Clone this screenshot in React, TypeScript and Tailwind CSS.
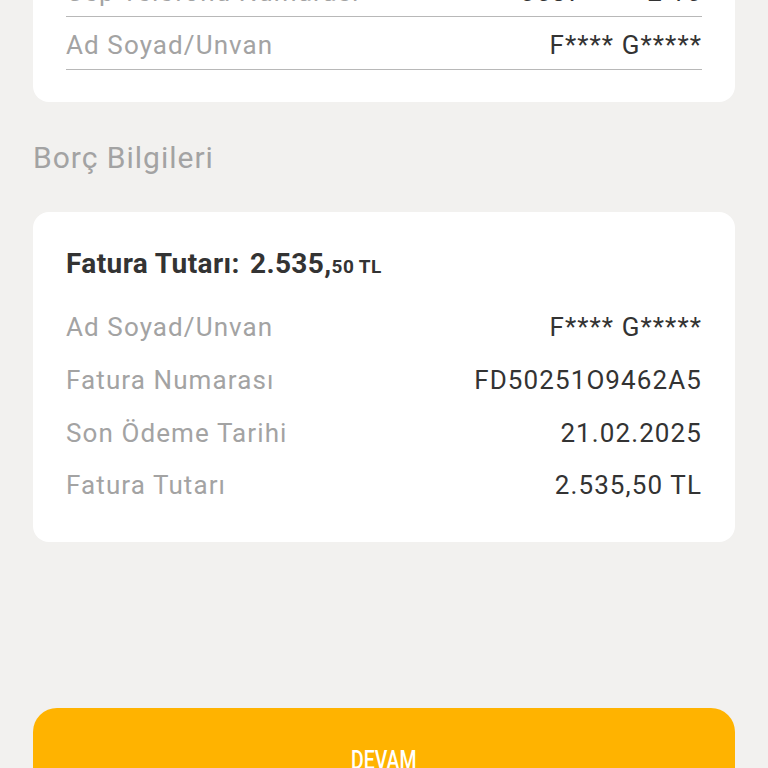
import React from 'react';

type Row = { label: string; value: string };

const customerRows: Row[] = [
  { label: 'Cep Telefonu Numarası', value: '0537 *** *2 16' },
  { label: 'Ad Soyad/Unvan', value: 'F**** G*****' },
];

const debtRows: Row[] = [
  { label: 'Ad Soyad/Unvan', value: 'F**** G*****' },
  { label: 'Fatura Numarası', value: 'FD50251O9462A5' },
  { label: 'Son Ödeme Tarihi', value: '21.02.2025' },
  { label: 'Fatura Tutarı', value: '2.535,50 TL' },
];

const App: React.FC = () => {
  return (
    <div
      className="min-h-screen w-full bg-[#f2f1ef] px-[33px] overflow-hidden"
      style={{ fontFamily: 'Roboto, "Noto Sans", sans-serif' }}
    >
      {/* Customer info card (scrolled, top cut off) */}
      <div className="mt-[-60px] rounded-[16px] bg-white px-[33px] pt-6 pb-[32px]">
        {customerRows.map((r) => (
          <div
            key={r.label}
            className="flex items-center justify-between border-b-[1.5px] border-[#b8b8b8] pt-[13px] pb-[9px] text-[26px] leading-[30px] tracking-[1.1px]"
          >
            <span className="text-[#a3a3a3]">{r.label}</span>
            <span className="text-[#333333]">{r.value}</span>
          </div>
        ))}
      </div>

      <h2 className="mt-[39px] text-[30px] leading-[34px] tracking-[1px] text-[#a3a3a3]">Borç Bilgileri</h2>

      {/* Debt info card */}
      <div className="mt-[37px] rounded-[16px] bg-white px-[33px] pt-[35px] pb-[30px]">
        <div className="flex items-baseline text-[28px] leading-[34px] font-bold tracking-[0.4px] text-[#333333]">
          <span>Fatura Tutarı:</span>
          <span className="ml-[10px]">2.535,</span>
          <span className="text-[19px]">50 TL</span>
        </div>
        <div className="mt-[17px]">
          {debtRows.map((r) => (
            <div
              key={r.label}
              className="flex h-[52.7px] items-center justify-between text-[26px] leading-[30px] tracking-[1.1px]"
            >
              <span className="text-[#a3a3a3]">{r.label}</span>
              <span className="text-[#333333]">{r.value}</span>
            </div>
          ))}
        </div>
      </div>

      <button className="mt-[166px] flex h-[104px] w-full items-center justify-center rounded-[24px] bg-[#ffb300] text-white">
        <span className="scale-x-75 text-[26px] leading-[30px] font-medium">DEVAM</span>
      </button>
    </div>
  );
};

export default App;
